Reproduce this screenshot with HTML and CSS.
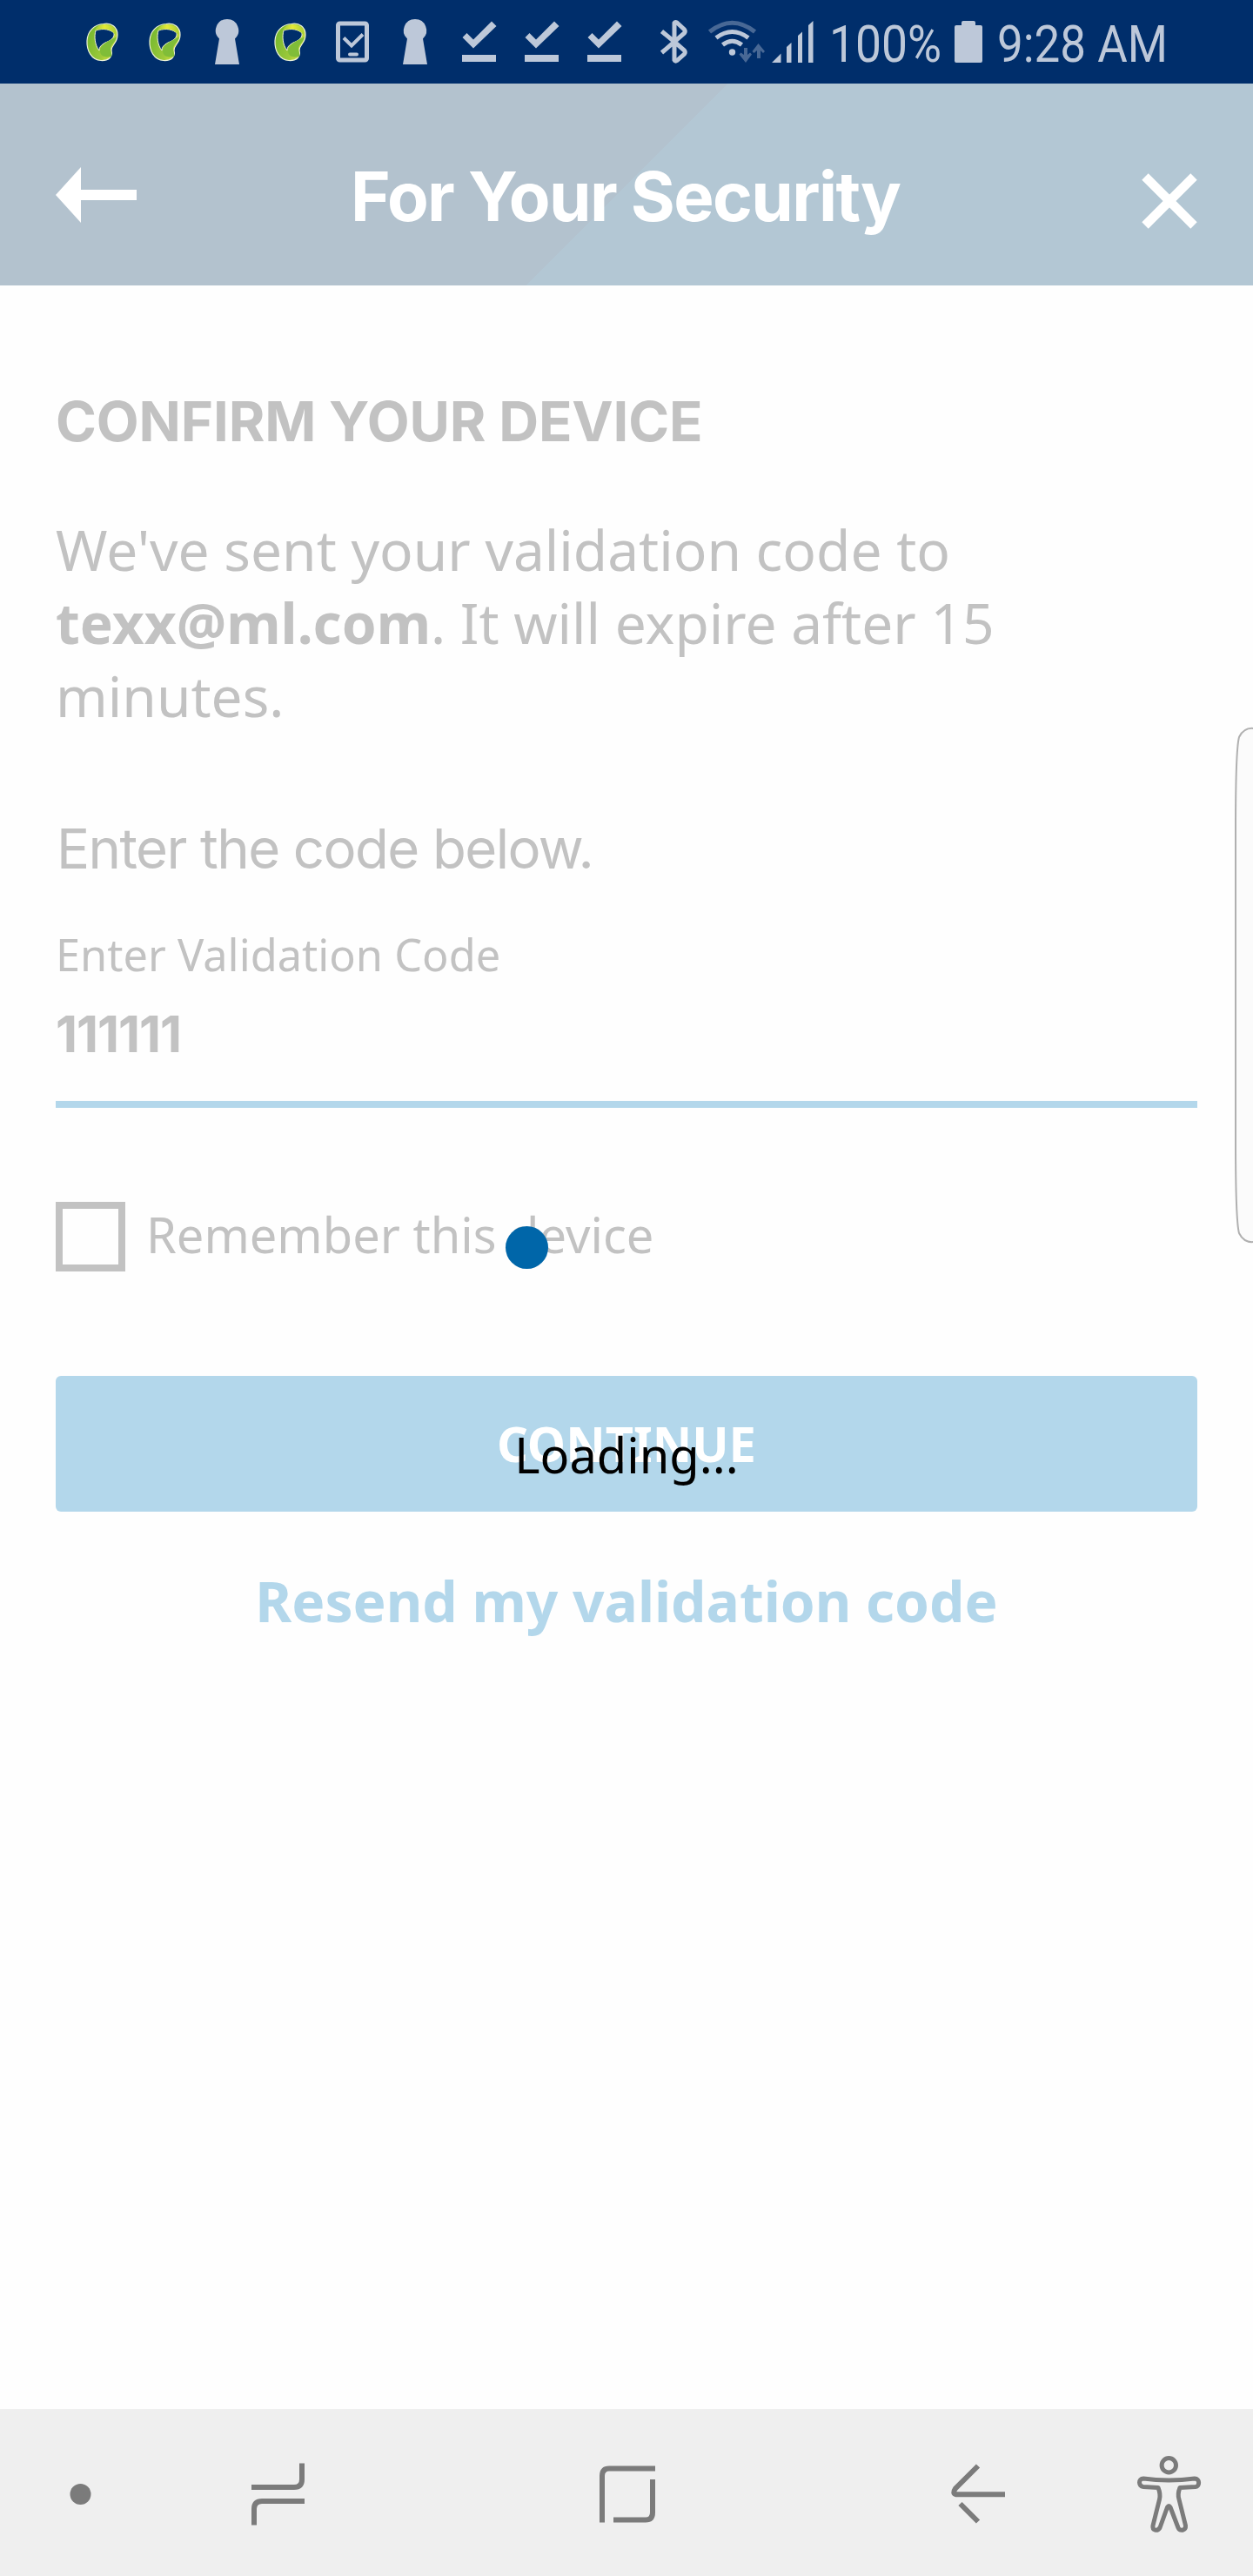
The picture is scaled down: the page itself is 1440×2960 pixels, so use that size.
FILE: index.html
```html
<!DOCTYPE html>
<html lang="en">
<head>
<meta charset="utf-8">
<title>For Your Security</title>
<link rel="stylesheet" href="styles.css">
</head>
<body>
<svg width="0" height="0" class="defs" aria-hidden="true">
  <defs>
    <linearGradient id="leaf-body" x1="0" y1="0.3" x2="1" y2="0.7">
      <stop offset="0" stop-color="#76b82f"/><stop offset="0.6" stop-color="#9cc93a"/><stop offset="1" stop-color="#dbe33a"/>
    </linearGradient>
    <linearGradient id="leaf-top" x1="0" y1="0" x2="1" y2="0">
      <stop offset="0" stop-color="#9cc93a"/><stop offset="0.45" stop-color="#e6ea35"/><stop offset="1" stop-color="#a9cf38"/>
    </linearGradient>
    <symbol id="leaf" viewBox="0 0 72 96">
      <path d="M38 27.500C47 26 54 31 54 40C54 50 47 51 47 58C49 66 43 70 35 69.500C24 69 18.500 58 19 47C19.500 36 27 28 38 27.500Z" fill="url(#leaf-body)" stroke="#eef3d8" stroke-width="1.200"/>
      <path d="M29 35C38 32 46 34 50 38C51 44 45 47 40 49C35 52 33 54 33 58C28 52 27 42 29 35Z" fill="#002e6b" stroke="#eef3d8" stroke-width="1"/>
      <path d="M28 35C30 27 45 26 51 33Q53 36 52 41C48 33 38 32 28 35Z" fill="url(#leaf-top)"/>
      <path d="M50 44C45 46 36 50 34 58C34 66 42 66 47 65C48 62 46 59 46 56C46 51 52 49 53 42Z" fill="#80bd38"/>
    </symbol>
    <symbol id="keyhole" viewBox="0 0 72 96">
      <path d="M36 22a13 13 0 0 1 9 22.500L50 74H22l5-29.500A13 13 0 0 1 36 22Z"/>
    </symbol>
    <symbol id="done" viewBox="0 0 72 96">
      <path d="M18 63h39v8H18zM18.500 43l5-5 7.500 7.500L52 24.500l5.500 5.500L31 55.500z"/>
    </symbol>
  </defs>
</svg>
<div class="screen">
  <div class="status">
    <svg class="slot"><use href="#leaf"/></svg>
    <svg class="slot"><use href="#leaf"/></svg>
    <svg class="slot"><use href="#keyhole"/></svg>
    <svg class="slot"><use href="#leaf"/></svg>
    <svg class="slot" viewBox="0 0 72 96"><g fill="none" stroke="#bdc8d9"><rect x="19.500" y="27" width="33" height="42" rx="2" stroke-width="5"/><path d="M26 43.500l9 9 13-13" stroke-width="4"/><path d="M33 62.500h8" stroke-width="4" stroke-linecap="round"/></g></svg>
    <svg class="slot"><use href="#keyhole"/></svg>
    <svg class="slot"><use href="#done"/></svg>
    <svg class="slot"><use href="#done"/></svg>
    <svg class="slot"><use href="#done"/></svg>
    <svg class="system" viewBox="729 0 711 96">
      <path d="M760.500 36L775 48V26.500Q776 25 778 26L786.500 34Q788 36 786.500 38L775 48L786.500 58Q788 60 786.500 62L778 69.500Q776 71 775 69V48L760.500 60.500" fill="none" stroke="#bdc8d9" stroke-width="5"/>
      <g fill="none" stroke="#bdc8d9" stroke-width="5">
        <path d="M815.500 36.500Q841.500 16 867.500 36.500" opacity=".38"/>
        <path d="M823 43.500Q841.500 29.500 860 43.500"/>
        <path d="M830.500 51.500Q841.500 43 852.500 51.500"/>
      </g>
      <circle cx="841.500" cy="60" r="3.700"/>
      <g opacity=".38"><path d="M855 55h4v8l3-2.500 2 2L857 72l-7.500-9.500 2-2L855 63zM870 67V58l-3.500 3-2-2L871.500 50l7.500 9-2 2-3-3v9z"/></g>
      <path d="M887 72l10.500-10.500V72zM904 72V54l5.500-5V72zM917 72V41l5-4.500V72zM929 72V29l5.500-5V72z"/>
      <path d="M1099 29h6v-3q0-2 2-2h12q2 0 2 2v3h6q2 0 2 2v39q0 2-2 2h-28q-2 0-2-2V31q0-2 2-2z"/>
      <text x="953" y="71" textLength="129" lengthAdjust="spacingAndGlyphs">100%</text>
      <text x="1146" y="71" textLength="196" lengthAdjust="spacingAndGlyphs">9:28 AM</text>
    </svg>
  </div>
  <header class="header">
    <svg class="back" viewBox="0 0 93 64"><path d="M0 32L29 0V26H93V38H29V64Z" fill="#fff"/></svg>
    <h1 class="title">For Your Security</h1>
    <svg class="close" viewBox="0 0 64 64"><path d="M4 4L60 60M60 4L4 60" stroke="#fff" stroke-width="10.500"/></svg>
  </header>
  <main class="content">
    <h2 class="heading">CONFIRM YOUR DEVICE</h2>
    <p class="message">We've sent your validation code to <b>texx@ml.com</b>. It will expire after 15 minutes.</p>
    <p class="prompt">Enter the code below.</p>
    <div class="label">Enter Validation Code</div>
    <div class="value">111111</div>
    <div class="remember"><span class="box"></span><span class="remember-text">Remember this device</span></div>
    <div class="continue">CONTINUE</div>
    <div class="resend">Resend my validation code</div>
  </main>
  <nav class="nav">
    <svg viewBox="0 2768 1440 192">
      <circle cx="92.500" cy="2866" r="12" fill="#7b7b7b"/>
      <g fill="none" stroke="#7b7b7b" stroke-width="6">
        <path d="M347 2830.500V2849Q347 2858 338 2858H289"/>
        <path d="M350 2874H301Q292 2874 292 2883V2901.500"/>
        <path d="M753 2836.500H700Q692 2836.500 692 2845V2898.500"/>
        <path d="M750 2849V2887Q750 2895.500 742 2895.500H705"/>
        <path d="M1155 2866.300H1099Q1094 2865 1098 2859.500L1124 2833.500M1103.500 2877L1124 2897.500"/>
        <circle cx="1343.300" cy="2832.700" r="8.200" stroke-width="5"/>
        <path stroke-width="5" stroke-linejoin="round" d="M1314 2848Q1343 2852 1373 2848C1379 2848 1379 2857 1374 2857.500L1356 2858.500Q1353 2866 1355 2872L1362.500 2902C1363 2908 1356 2909 1354 2904.500L1345 2881Q1343.300 2878 1341.500 2881L1333 2904.500C1330 2909 1324 2908 1325 2902L1332.500 2872Q1334 2866 1331 2858.500L1314 2857.500C1308 2857 1308 2848 1314 2848Z"/>
      </g>
    </svg>
  </nav>
  <svg class="edge" viewBox="0 0 22 596"><path d="M23 3C14 2 9 7 6 13C3 24 2 60 2 120V476C2 536 3 572 6 583C9 589 14 594 23 593" fill="#fbfbfb" stroke="#b0b0b0" stroke-width="2"/></svg>
  <div class="spinner"></div>
  <div class="loading">Loading...</div>
</div>
</body>
</html>
```
FILE: styles.css
```css
* { box-sizing: border-box; }
body { margin: 0; background: #fefefe; }
h1, h2, p { margin: 0; }
svg { display: block; }
.defs { position: absolute; }
.screen {
  position: relative;
  width: 1440px;
  height: 2960px;
  display: flex;
  flex-direction: column;
  overflow: hidden;
  font-family: "Noto Sans", sans-serif;
  color: #c2c2c2;
  background: #fefefe;
}
.status { height: 96px; display: flex; padding-left: 81px; background: #002e6b; }
.status svg { fill: #bdc8d9; }
.slot { width: 72px; height: 96px; flex: none; }
.system { width: 711px; height: 96px; flex: none; font: 60px Roboto, sans-serif; }
.header {
  height: 232px;
  display: flex;
  align-items: flex-start;
  padding: 0 64px;
  background: linear-gradient(135deg, #b3c2ce 0 50%, #b3c7d4 50%);
}
.back { width: 93px; height: 64px; margin-top: 96px; }
.title {
  margin: 82px 0 0 246px;
  color: #fff;
  font: 700 78px/96px Inter, sans-serif;
  letter-spacing: -1.65px;
  white-space: nowrap;
}
.close { width: 64px; height: 64px; margin: 103px 0 0 auto; }
.content { flex: 1; padding: 116px 64px 0; }
.heading { font: 700 63.500px/80px Inter, sans-serif; letter-spacing: -0.15px; white-space: nowrap; }
.message { margin-top: 66px; width: 1180px; font-size: 64px; line-height: 84px; }
.prompt { margin-top: 93px; padding-left: 1px; font: 400 63.500px/80px Inter, sans-serif; letter-spacing: -1.6px; }
.label { margin-top: 52px; font-size: 50.500px; line-height: 60px; }
.value {
  margin-top: 26px;
  height: 120px;
  font: 700 58px/70px Inter, sans-serif;
  letter-spacing: -1px;
  border-bottom: 8px solid #b3d7eb;
}
.remember { display: flex; gap: 24px; margin-top: 108px; height: 80px; }
.box { width: 80px; height: 80px; border: 8px solid #c2c2c2; }
.remember-text { font-size: 56px; line-height: 74px; }
.continue {
  height: 156px;
  margin-top: 120px;
  border-radius: 6px;
  background: #b3d7eb;
  color: #fff;
  font-weight: 700;
  font-size: 56px;
  line-height: 154px;
  text-align: center;
}
.resend { margin-top: 61px; color: #b3d7eb; font-weight: 700; font-size: 64px; line-height: 84px; text-align: center; }
.nav { height: 192px; background: #efefef; }
.nav svg { width: 1440px; height: 192px; }
.edge { position: absolute; right: 0; top: 834px; width: 22px; height: 596px; }
.spinner { position: absolute; left: 581px; top: 1409px; width: 49px; height: 49px; border-radius: 50%; background: #0066a9; }
.loading { position: absolute; left: 0; right: 0; top: 1633px; color: #000; font-size: 56px; line-height: 76px; text-align: center; }
```
